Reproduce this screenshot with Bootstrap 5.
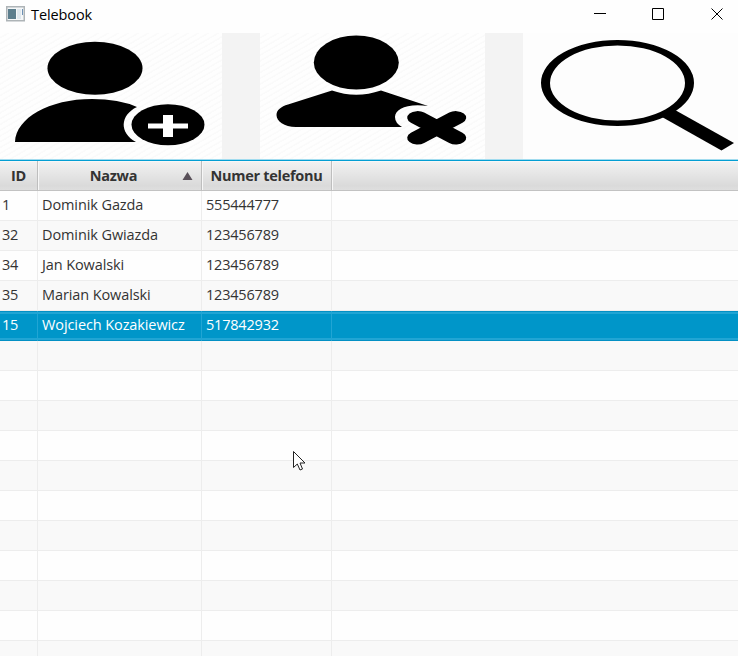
<!DOCTYPE html>
<html lang="pl">
<head>
<meta charset="utf-8">
<title>Telebook</title>
<link href="https://cdn.jsdelivr.net/npm/bootstrap@5.3.0/dist/css/bootstrap.min.css" rel="stylesheet">
<style>
body{font-family:"Open Sans","Noto Sans",sans-serif;font-size:14.5px;color:#333;background:#fff}
.window{width:738px;height:656px}
.titlebar{height:33px;background:#fefefe;color:#000;padding-left:6px}
.titlebar .caption{line-height:29px;margin-left:5px;letter-spacing:-.1px}
.titlebar svg{display:block}
.toolbar{height:126px;background:#f3f3f3;gap:38px}
.tool{background:#fdfdfd;height:126px}
.tool svg{display:block}
.hatched{background:repeating-linear-gradient(150deg,#fefefe 0 3px,#fafafa 4px 5px)}
.w-add{width:222px}.w-del{width:225px}.w-find{width:215px}
.grid-pane{border-top:1px solid #a2dcef;height:497px}
.contacts{--bs-table-bg:transparent;table-layout:fixed;border-collapse:separate;border-spacing:0;color:#333;border-top:1px solid #039ed3}
.contacts>thead>tr>th{height:30px;padding:0;text-align:center;line-height:29px;font-weight:700;border:0;border-right:1px solid #bebebe;border-bottom:1px solid #c2c2c2;background:linear-gradient(#f2f2f2,#dadada 85%,#dedede);box-shadow:inset 1px 1px #f7f7f7;letter-spacing:-.3px;white-space:nowrap}
.contacts>thead>tr>th:first-child{box-shadow:inset 0 1px #f7f7f7}
.contacts>thead>tr>th:last-child{border-right:0}
.contacts>tbody>tr>td{height:30px;padding:0 0 0 4px;line-height:28px;border:0;border-right:1px solid #ededed;border-bottom:1px solid #ededed;background:#fefefe;box-shadow:none;letter-spacing:-.2px;white-space:nowrap;vertical-align:top}
.contacts>tbody>tr>td:nth-child(2){letter-spacing:-.1px}
.contacts>tbody>tr>td:first-child{padding-left:2px}
.contacts>tbody>tr>td:last-child{border-right:0}
.contacts>tbody>tr:nth-child(even)>td{background:#f9f9f9}
.contacts>tbody>tr.picked:nth-child(n)>td{background:linear-gradient(#0390c4 0 1px,#21a5d4 1px 3px,#0096c9 3px 27px,#21a5d4 27px 29px,#0390c4 29px);background-origin:border-box;border-right-color:#21a5d4;border-bottom:0;color:#fff}
.contacts .title-text{padding-right:12px}
.sort-mark{right:8px;top:11px}
.pointer{left:292px;top:450px}
</style>
<script src="https://cdn.jsdelivr.net/npm/bootstrap@5.3.0/dist/js/bootstrap.bundle.min.js"></script>
</head>
<body class="overflow-hidden">
<main class="window position-relative overflow-hidden">
<header class="titlebar d-flex">
  <svg width="20" height="29" viewBox="0 0 20 29"><rect x=".75" y="6.75" width="17.5" height="14" fill="#f5f7f8" stroke="#aeb4b7" stroke-width="1.5"/><rect x="2" y="9" width="8" height="10" fill="#5c7e8d"/><rect x="11" y="9" width="4" height="10" fill="#dfe8ee"/><rect x="16" y="9" width="1" height="6" fill="#6d91b5"/></svg>
  <span class="caption">Telebook</span>
  <svg class="ms-auto" width="146" height="33" viewBox="0 0 146 33" fill="none" stroke="#000" stroke-width="1"><path d="M2 13.5h12M60.500 8.500h11v11h-11zM119.500 8.500l11 11M130.500 8.500l-11 11"/></svg>
</header>
<nav class="toolbar d-flex">
  <div class="tool hatched w-add"><svg width="222" height="126" viewBox="0 33 222 126"><ellipse cx="95" cy="68.200" rx="47.500" ry="26.500"/><path d="M15 142C16 118 49 99 92 99Q119 99 137 107C120 115 119 133 136 142Z"/><ellipse cx="168" cy="124.700" rx="36.500" ry="20.500"/><path d="M163 115h10v8.500h15v5h-15v8.500h-10v-8.500h-15v-5h15z" fill="#fff"/></svg></div>
  <div class="tool hatched w-del"><svg width="225" height="126" viewBox="260 33 225 126"><ellipse cx="356.300" cy="62.500" rx="42.500" ry="27"/><path d="M332 90.500Q356 99 381 90.500L428 106C407 103 395 109 395 117Q395 123 402 127H296C284 127 276.500 121 276.500 115C276.500 110 281 106.500 288 104.500Z"/><path d="M-12.200 -10.100L12.200 10.100M12.200 -10.100L-12.200 10.100" stroke="#000" stroke-width="13.200" stroke-linecap="round" transform="translate(436.700 127.800) scale(1.57 1)"/></svg></div>
  <div class="tool w-find"><svg width="215" height="126" viewBox="523 33 215 126"><path fill-rule="evenodd" d="M541 83a76.500 43 0 1 0 153 0a76.500 43 0 1 0 -153 0M550 83a67.500 37.500 0 1 0 135 0a67.500 37.500 0 1 0 -135 0"/><path d="M675 110L734 143L721.500 150.500L662 117Z"/></svg></div>
</nav>
<section class="grid-pane overflow-hidden">
<table class="table contacts w-100 mb-0">
<colgroup><col style="width:38px"><col style="width:164px"><col style="width:130px"><col></colgroup>
<thead><tr><th>ID</th><th class="position-relative"><span class="title-text">Nazwa</span><svg class="sort-mark position-absolute" width="11" height="9"><path d="M5.500 0L10.500 8H.5z" fill="#595059"/></svg></th><th>Numer telefonu</th><th></th></tr></thead>
<tbody>
<tr><td>1</td><td>Dominik Gazda</td><td>555444777</td><td></td></tr>
<tr><td>32</td><td>Dominik Gwiazda</td><td>123456789</td><td></td></tr>
<tr><td>34</td><td>Jan Kowalski</td><td>123456789</td><td></td></tr>
<tr><td>35</td><td>Marian Kowalski</td><td>123456789</td><td></td></tr>
<tr class="picked"><td>15</td><td>Wojciech Kozakiewicz</td><td>517842932</td><td></td></tr>
<tr><td></td><td></td><td></td><td></td></tr>
<tr><td></td><td></td><td></td><td></td></tr>
<tr><td></td><td></td><td></td><td></td></tr>
<tr><td></td><td></td><td></td><td></td></tr>
<tr><td></td><td></td><td></td><td></td></tr>
<tr><td></td><td></td><td></td><td></td></tr>
<tr><td></td><td></td><td></td><td></td></tr>
<tr><td></td><td></td><td></td><td></td></tr>
<tr><td></td><td></td><td></td><td></td></tr>
<tr><td></td><td></td><td></td><td></td></tr>
<tr><td></td><td></td><td></td><td></td></tr>
</tbody></table>
</section>
<svg class="pointer position-absolute" width="15" height="22" viewBox="0 0 15 22"><path d="M1.500 1.500V17.500L5.300 14L8 20L10.500 19L8 13H13Z" fill="#fff" stroke="#222" stroke-width="1"/></svg>
</main>
</body>
</html>
